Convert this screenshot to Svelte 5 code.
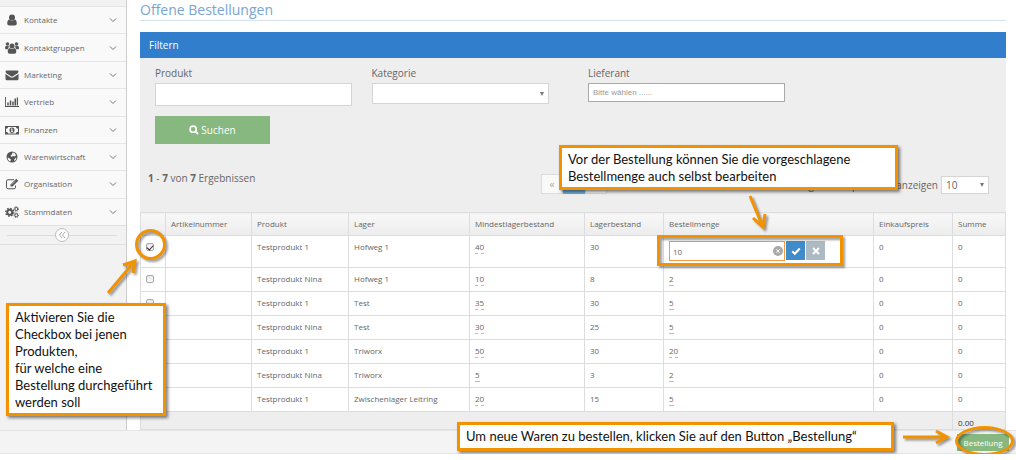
<script lang="ts">
	type MenuItem = { label: string; icon: string };
	type Row = {
		id: number;
		product: string;
		store: string;
		min: number;
		stock: number;
		amount: number;
		checked?: boolean;
		editing?: boolean;
	};

	const menu: MenuItem[] = [
		{ label: 'Kontakte', icon: 'user' },
		{ label: 'Kontaktgruppen', icon: 'users' },
		{ label: 'Marketing', icon: 'mail' },
		{ label: 'Vertrieb', icon: 'chart' },
		{ label: 'Finanzen', icon: 'money' },
		{ label: 'Warenwirtschaft', icon: 'globe' },
		{ label: 'Organisation', icon: 'edit' },
		{ label: 'Stammdaten', icon: 'cogs' }
	];

	let rows: Row[] = $state([
		{ id: 1, product: 'Testprodukt 1', store: 'Hofweg 1', min: 40, stock: 30, amount: 10, checked: true, editing: true },
		{ id: 2, product: 'Testprodukt Nina', store: 'Hofweg 1', min: 10, stock: 8, amount: 2 },
		{ id: 3, product: 'Testprodukt 1', store: 'Test', min: 35, stock: 30, amount: 5 },
		{ id: 4, product: 'Testprodukt Nina', store: 'Test', min: 30, stock: 25, amount: 5 },
		{ id: 5, product: 'Testprodukt 1', store: 'Triworx', min: 50, stock: 30, amount: 20 },
		{ id: 6, product: 'Testprodukt Nina', store: 'Triworx', min: 5, stock: 3, amount: 2 },
		{ id: 7, product: 'Testprodukt 1', store: 'Zwischenlager Leitring', min: 20, stock: 15, amount: 5 }
	]);
</script>

{#snippet icon(name: string)}
	<svg class="icon" viewBox="0 0 28 24" aria-hidden="true">
		{#if name === 'user'}
			<circle cx="14" cy="7" r="6" />
			<path d="M8.500 11c-3 1-4 4-4 8 0 2.500 1.500 4 4 4h11c2.500 0 4-1.500 4-4 0-4-1-7-4-8-3 3-8 3-11 0z" />
		{:else if name === 'users'}
			<circle cx="5" cy="4" r="3.500" />
			<circle cx="23" cy="4" r="3.500" />
			<path d="M3 7.500c-2 0-3 2-3 5 0 1 1 1.800 2 1.800h4c0-2 .5-3 2-4.300L8 8c-1 .6-3 .6-5-.5zM25 7.500c2 0 3 2 3 5 0 1-1 1.800-2 1.800h-4c0-2-.5-3-2-4.300l0-2c1 .6 3 .6 5-.5z" />
			<circle cx="14" cy="8" r="5" />
			<path d="M9.500 12c-3 .7-4 3.500-4 7.500 0 2.500 1.500 4 4 4h9c2.500 0 4-1.500 4-4 0-4-1-6.800-4-7.500-2.500 2.500-6.500 2.500-9 0z" />
		{:else if name === 'mail'}
			<path d="M1 5.500Q1 3 3.500 3h21Q27 3 27 5.500C27 8 20 12 17 14c-2 1.400-4 1.400-6 0C8 12 1 8 1 5.500z" />
			<path d="M1 9.500c3 3 6 4.500 9 6.700 3 2 5 2 8 0 3-2.200 6-3.700 9-6.700V20q0 2.500-2.500 2.500h-21Q1 22.500 1 20z" />
		{:else if name === 'chart'}
			<path d="M0 2h1.800v18.200H28V22H0zM4.500 13h3v6h-3zM9.500 9h3v10h-3zM14.500 11h3v8h-3zM19 5h3v14h-3zM23.500 3h2.500v16h-2.500z" />
		{:else if name === 'money'}
			<path fill-rule="evenodd" d="M0 4h28v17H0zM6 6c0 2-1.500 3.500-4 3.500v6c2.500 0 4 1.500 4 3.500h16c0-2 1.500-3.500 4-3.500v-6c-2.500 0-4-1.500-4-3.500zM14 7a5 5.500 0 1 1 0 11a5 5.500 0 1 1 0-11z" />
			<path class="cut" d="M13 9h2v5.500h1.300V16h-4.600v-1.500H13v-3.300l-1 .4V10z" />
		{:else if name === 'globe'}
			<circle cx="14" cy="12" r="11" />
			<path class="cut" d="M15 3l4 1 3 4-2 3-4-1-3 2-2-3 3-2zM5 13l3 1 4 3-1 3-2 1-3-4zM20 15l3-2-1 4-3 3-1-2z" />
		{:else if name === 'edit'}
			<path class="line" d="M18 3.500H6Q3 3.500 3 6.500v12q0 3 3 3h12q3 0 3-3V15" />
			<path d="M22.500 1.500l4 4L15 17h-4v-4z" />
			<path class="thin" d="M13 13.500l8-8" />
		{:else}
			<circle class="gear" cx="9.500" cy="12.500" r="5" />
			<circle class="teeth" cx="9.500" cy="12.500" r="7.800" />
			<circle class="small-gear" cx="22.500" cy="6" r="3" />
			<circle class="small-teeth" cx="22.500" cy="6" r="4.600" />
			<circle class="small-gear" cx="22.500" cy="18.500" r="3" />
			<circle class="small-teeth" cx="22.500" cy="18.500" r="4.600" />
		{/if}
	</svg>
{/snippet}

<div class="page">
	<div class="shell">
		<nav class="sidebar">
			<ul>
				{#each menu as item}
					<li>
						<a href="#{item.icon}">
							{@render icon(item.icon)}
							<span>{item.label}</span>
							<svg class="chevron" viewBox="0 0 8 8" aria-hidden="true"><path d="M1 2.500l3 3 3-3" /></svg>
						</a>
					</li>
				{/each}
			</ul>
			<div class="collapse">
				<button aria-label="Menü einklappen">
					<svg viewBox="0 0 8 8" aria-hidden="true"><path d="M4 1L1.500 4 4 7M7 1L4.500 4 7 7" /></svg>
				</button>
			</div>
		</nav>

		<main>
			<h1>Offene Bestellungen</h1>
			<h2>Filtern</h2>
			<div class="panel">
				<form onsubmit={(e) => e.preventDefault()}>
					<div class="field">
						<label for="product">Produkt</label>
						<input id="product" type="text" />
					</div>
					<div class="field category">
						<label for="category">Kategorie</label>
						<div class="select">
							<select id="category"><option></option></select>
						</div>
					</div>
					<div class="field supplier">
						<label for="supplier">Lieferant</label>
						<input id="supplier" type="text" placeholder="Bitte wählen ......" />
					</div>
					<button class="search">
						<svg viewBox="0 0 12 12" aria-hidden="true"><circle cx="5" cy="5" r="3.700" /><path d="M8 8l3 3" /></svg>
						Suchen
					</button>
				</form>

				<div class="toolbar">
					<p><b>1</b> - <b>7</b> von <b>7</b> Ergebnissen</p>
					<div class="pager">
						<button>«</button>
						<button class="active" aria-label="Seite 1"></button>
						<button aria-label="Nächste Seite"></button>
					</div>
					<div class="per-page">
						<label for="per-page">Ergebnisse pro Seite anzeigen</label>
						<div class="select">
							<select id="per-page"><option>10</option></select>
						</div>
					</div>
				</div>

				<table>
					<colgroup>
						<col class="w-check" />
						<col class="w-number" />
						<col class="w-product" />
						<col class="w-store" />
						<col class="w-min" />
						<col class="w-stock" />
						<col />
						<col class="w-price" />
						<col class="w-sum" />
					</colgroup>
					<thead>
						<tr>
							<th></th>
							<th>Artikelnummer</th>
							<th>Produkt</th>
							<th>Lager</th>
							<th>Mindestlagerbestand</th>
							<th>Lagerbestand</th>
							<th>Bestellmenge</th>
							<th>Einkaufspreis</th>
							<th>Summe</th>
						</tr>
					</thead>
					<tbody>
						{#each rows as row (row.id)}
							<tr class:editing={row.editing}>
								<td class="check">
									<input type="checkbox" aria-label={row.product} bind:checked={row.checked} />
								</td>
								<td></td>
								<td>{row.product}</td>
								<td>{row.store}</td>
								<td><span class="editable">{row.min}</span></td>
								<td>{row.stock}</td>
								<td>
									{#if row.editing}
										<div class="editor">
											<div class="amount">
												<input type="text" aria-label="Bestellmenge" bind:value={row.amount} />
												<button class="clear" aria-label="Leeren">
													<svg viewBox="0 0 10 10" aria-hidden="true"><circle cx="5" cy="5" r="5" /><path d="M3.300 3.300l3.400 3.400M6.700 3.300L3.300 6.700" /></svg>
												</button>
											</div>
											<button class="ok" aria-label="Speichern">
												<svg viewBox="0 0 10 10" aria-hidden="true"><path d="M1.300 5.300l2.500 2.500L8.800 2.500" /></svg>
											</button>
											<button class="cancel" aria-label="Abbrechen">
												<svg viewBox="0 0 10 10" aria-hidden="true"><path d="M2 2l6 6M8 2L2 8" /></svg>
											</button>
										</div>
									{:else}
										<span class="editable">{row.amount}</span>
									{/if}
								</td>
								<td>0</td>
								<td>0</td>
							</tr>
						{/each}
					</tbody>
					<tfoot>
						<tr>
							<td colspan="8"></td>
							<td>0.00</td>
						</tr>
					</tfoot>
				</table>
			</div>
		</main>
	</div>

	<footer>
		<button class="order">Bestellung</button>
	</footer>

	<!-- help callouts over the page -->
	<div class="mark mark-amount"></div>
	<div class="mark mark-check"></div>
	<div class="mark mark-order"></div>
	<svg class="arrow arrow-check" viewBox="0 0 36 42" aria-hidden="true"><path d="M4 37L30 6M19 9l12-4-2 12" /></svg>
	<svg class="arrow arrow-amount" viewBox="0 0 28 42" aria-hidden="true"><path d="M6 5l13 31M9 27l10 9 2-13" /></svg>
	<svg class="arrow arrow-order" viewBox="0 0 52 20" aria-hidden="true"><path d="M3 10h44M36 4l11 6-11 6" /></svg>
	<aside class="note note-check">
		Aktivieren Sie die<br />Checkbox bei jenen<br />Produkten,<br />für welche eine<br />Bestellung durchgeführt<br />werden soll
	</aside>
	<aside class="note note-amount">
		Vor der Bestellung können Sie die vorgeschlagene<br />Bestellmenge auch selbst bearbeiten
	</aside>
	<aside class="note note-order">Um neue Waren zu bestellen, klicken Sie auf den Button „Bestellung“</aside>
</div>

<style>
	:global(body) {
		background: #fff;
	}

	* {
		box-sizing: border-box;
	}

	.page {
		position: relative;
		overflow: hidden;
		font-family: 'Open Sans', sans-serif;
		font-size: 8px;
		line-height: 12px;
		color: #666;
	}

	button,
	input,
	select {
		font: inherit;
		color: inherit;
		margin: 0;
		padding: 0;
		border: 0;
		border-radius: 0;
	}

	.shell {
		display: flex;
	}

	/* sidebar */
	.sidebar {
		flex: 0 0 127px;
		margin-right: 13px;
		padding-top: 6px;
		background: #f2f2f2;
		border-right: 1px solid #ccc;
	}

	.sidebar ul {
		display: grid;
		grid-auto-rows: 1fr;
		height: 219px;
		margin: 0;
		padding: 0;
		list-style: none;
	}

	.sidebar li {
		display: grid;
		background: #f9f9f9;
		border-top: 1px solid #e5e5e5;
	}

	.sidebar a {
		display: flex;
		align-items: center;
		gap: 5px;
		padding: 0 9px 0 5px;
		color: #666;
		text-decoration: none;
	}

	.sidebar span {
		flex: 1;
	}

	.icon {
		width: 14px;
		height: 12px;
		fill: #555;
	}

	.icon .cut {
		fill: #f9f9f9;
	}

	.icon .line,
	.gear,
	.teeth,
	.small-gear,
	.small-teeth {
		fill: none;
		stroke: #555;
		stroke-width: 2;
	}

	.icon .thin {
		stroke: #f9f9f9;
		stroke-width: 1;
	}

	.icon .gear {
		stroke-width: 4;
	}

	.icon .teeth {
		stroke-width: 3;
		stroke-dasharray: 3.060 3.060;
	}

	.icon .small-teeth {
		stroke-dasharray: 1.800 1.800;
	}

	.chevron {
		width: 8px;
		height: 8px;
		fill: none;
		stroke: #777;
	}

	.collapse {
		display: flex;
		align-items: center;
		height: 20px;
		padding: 0 9px 0 7px;
		border-top: 1px solid #e0e0e0;
		border-bottom: 1px solid #e0e0e0;
	}

	.collapse::before,
	.collapse::after {
		content: '';
		flex: 1;
		height: 1px;
		background: #ddd;
	}

	.collapse button {
		display: grid;
		place-items: center;
		width: 14px;
		height: 14px;
		background: #fff;
		border: 1px solid #bbb;
		border-radius: 50%;
	}

	.collapse svg {
		width: 8px;
		height: 8px;
		fill: none;
		stroke: #aaa;
	}

	/* content */
	main {
		flex: 1;
		min-width: 0;
		margin-right: 10px;
	}

	h1 {
		height: 21px;
		margin: 0 0 11px;
		font-size: 14px;
		font-weight: 400;
		line-height: 19px;
		color: #78a5d3;
		border-bottom: 1px solid #d5e3ef;
	}

	h2 {
		margin: 0;
		padding: 0 9px;
		font-size: 10px;
		font-weight: 400;
		line-height: 26px;
		color: #fff;
		background: #307ecc;
	}

	.panel {
		background: #eee;
	}

	form {
		display: grid;
		grid-template-columns: repeat(4, 1fr);
		padding-top: 8px;
	}

	.field {
		padding: 0 5px 0 15px;
	}

	.field label {
		display: block;
		margin-bottom: 3px;
		font-size: 10px;
		line-height: 14px;
	}

	.field input {
		display: block;
		width: 100%;
		height: 23px;
		padding: 0 4px;
		background: #fff;
		border: 1px solid #d5d5d5;
	}

	.field.category {
		padding-right: 24px;
	}

	.field.supplier input {
		height: 19px;
		font: 8px 'Liberation Sans', sans-serif;
		border-color: #aaa;
	}

	.field input::placeholder {
		color: #999;
	}

	.select {
		position: relative;
	}

	.select::after {
		content: '';
		position: absolute;
		top: 50%;
		right: 5px;
		margin-top: -2px;
		border: solid transparent;
		border-width: 4px 2px 0;
		border-top-color: #777;
		pointer-events: none;
	}

	.select select {
		display: block;
		width: 100%;
		height: 21px;
		padding: 0 4px;
		appearance: none;
		background: #fff;
		border: 1px solid #d5d5d5;
	}

	.search {
		grid-column: 1;
		display: flex;
		align-items: center;
		justify-content: center;
		gap: 2px;
		width: 115px;
		height: 28px;
		margin: 10px 0 0 15px;
		font-size: 10px;
		color: #fff;
		background: #87b87f;
	}

	.search svg {
		width: 10px;
		height: 10px;
		fill: none;
		stroke: #fff;
		stroke-width: 2;
	}

	.toolbar {
		display: flex;
		height: 68px;
		padding: 27px 17px 0 8px;
		font-size: 10px;
		line-height: 14px;
	}

	.toolbar p {
		flex: 0 0 393px;
		margin: 0;
	}

	.pager {
		display: flex;
		height: 20px;
		margin-top: 3px;
	}

	.pager button {
		width: 22px;
		color: #aaa;
		background: #f9f9f9;
		border: 1px solid #ddd;
	}

	.pager .active {
		color: #fff;
		background: #6faed9;
		border-color: #6faed9;
	}

	.per-page {
		display: flex;
		gap: 3px;
		align-items: center;
		height: 18px;
		margin: 5px 0 0 auto;
	}

	.per-page .select {
		width: 48px;
	}

	.per-page select {
		height: 18px;
	}

	/* table */
	table {
		width: 100%;
		table-layout: fixed;
		border-collapse: collapse;
	}

	.w-check {
		width: 25px;
	}

	.w-number {
		width: 86px;
	}

	.w-product {
		width: 97px;
	}

	.w-store {
		width: 121px;
	}

	.w-min {
		width: 115px;
	}

	.w-stock,
	.w-price {
		width: 79px;
	}

	.w-sum {
		width: 53px;
	}

	th,
	td {
		padding: 5px 5px 0;
		text-align: left;
		vertical-align: top;
		border: 1px solid #ddd;
	}

	th {
		height: 23px;
		font-weight: 400;
		color: #666;
		white-space: nowrap;
		background: linear-gradient(#f8f8f8, #ececec);
	}

	tbody tr {
		height: 24px;
		background: #fff;
	}

	tbody .editing {
		height: 32px;
	}

	tfoot td {
		height: 18px;
		color: #333;
	}

	.check {
		padding: 7px 5px 0;
	}

	.check input {
		display: grid;
		place-items: center;
		width: 8px;
		height: 8px;
		appearance: none;
		background: linear-gradient(#e8e8e8, #fafafa);
		border: 1px solid #aaa;
		border-radius: 2px;
	}

	.check input:checked::after {
		content: '';
		width: 5px;
		height: 3px;
		border: solid #222;
		border-width: 0 0 1px 1px;
		transform: rotate(-48deg);
	}

	.editable {
		display: inline-block;
		border-bottom: 1px dashed #bbb;
	}

	.editor {
		display: flex;
		gap: 1px;
	}

	.amount {
		position: relative;
		width: 116px;
		height: 20px;
	}

	.amount input {
		width: 100%;
		height: 100%;
		padding: 0 18px 0 3px;
		border: 1px solid #f59942;
	}

	.editor button {
		display: grid;
		place-items: center;
		width: 19px;
		height: 19px;
		background: #428bca;
	}

	.editor .cancel {
		background: #abbac3;
	}

	.editor svg {
		width: 10px;
		height: 10px;
		fill: none;
		stroke: #fff;
		stroke-width: 2;
	}

	.editor .clear {
		position: absolute;
		top: 0;
		right: 0;
		width: 14px;
		background: none;
	}

	.editor .clear svg {
		stroke-width: 1;
	}

	.clear circle {
		fill: #aaa;
		stroke: none;
	}

	footer {
		display: flex;
		justify-content: flex-end;
		height: 24px;
		padding: 3px 7px 0;
		background: #f4f4f4;
		border-top: 1px solid #e5e5e5;
		border-bottom: 1px solid #e5e5e5;
	}

	.order {
		width: 52px;
		height: 17px;
		color: #fff;
		background: #87b87f;
	}

	/* callouts */
	.note,
	.mark,
	.arrow {
		position: absolute;
	}

	.note {
		padding: 3px 6px;
		font-family: Lato, sans-serif;
		font-size: 13px;
		line-height: 17px;
		color: #111;
		white-space: nowrap;
		background: #fff;
		border: 3px solid #f39200;
		box-shadow: 2px 2px 3px rgba(0, 0, 0, 0.5);
	}

	.note-check {
		top: 303px;
		left: 6px;
		width: 160px;
		height: 113px;
	}

	.note-amount {
		top: 145px;
		left: 559px;
		width: 339px;
		height: 45px;
	}

	.note-order {
		top: 422px;
		left: 457px;
		width: 437px;
		height: 29px;
	}

	.mark {
		border: 3px solid #f39200;
		filter: drop-shadow(2px 2px 1px rgba(0, 0, 0, 0.4));
		pointer-events: none;
	}

	.mark-check {
		top: 229px;
		left: 135px;
		width: 31px;
		height: 31px;
		border-radius: 50%;
	}

	.mark-amount {
		top: 235px;
		left: 657px;
		width: 186px;
		height: 31px;
	}

	.mark-order {
		top: 426px;
		left: 955px;
		width: 59px;
		height: 30px;
		border-radius: 50%;
	}

	.arrow {
		fill: none;
		stroke: #f39200;
		stroke-width: 3;
		filter: drop-shadow(2px 2px 1px rgba(0, 0, 0, 0.4));
	}

	.arrow-check {
		top: 256px;
		left: 104px;
		width: 36px;
	}

	.arrow-amount {
		top: 191px;
		left: 744px;
		width: 28px;
	}

	.arrow-order {
		top: 427px;
		left: 900px;
		width: 52px;
	}
</style>
